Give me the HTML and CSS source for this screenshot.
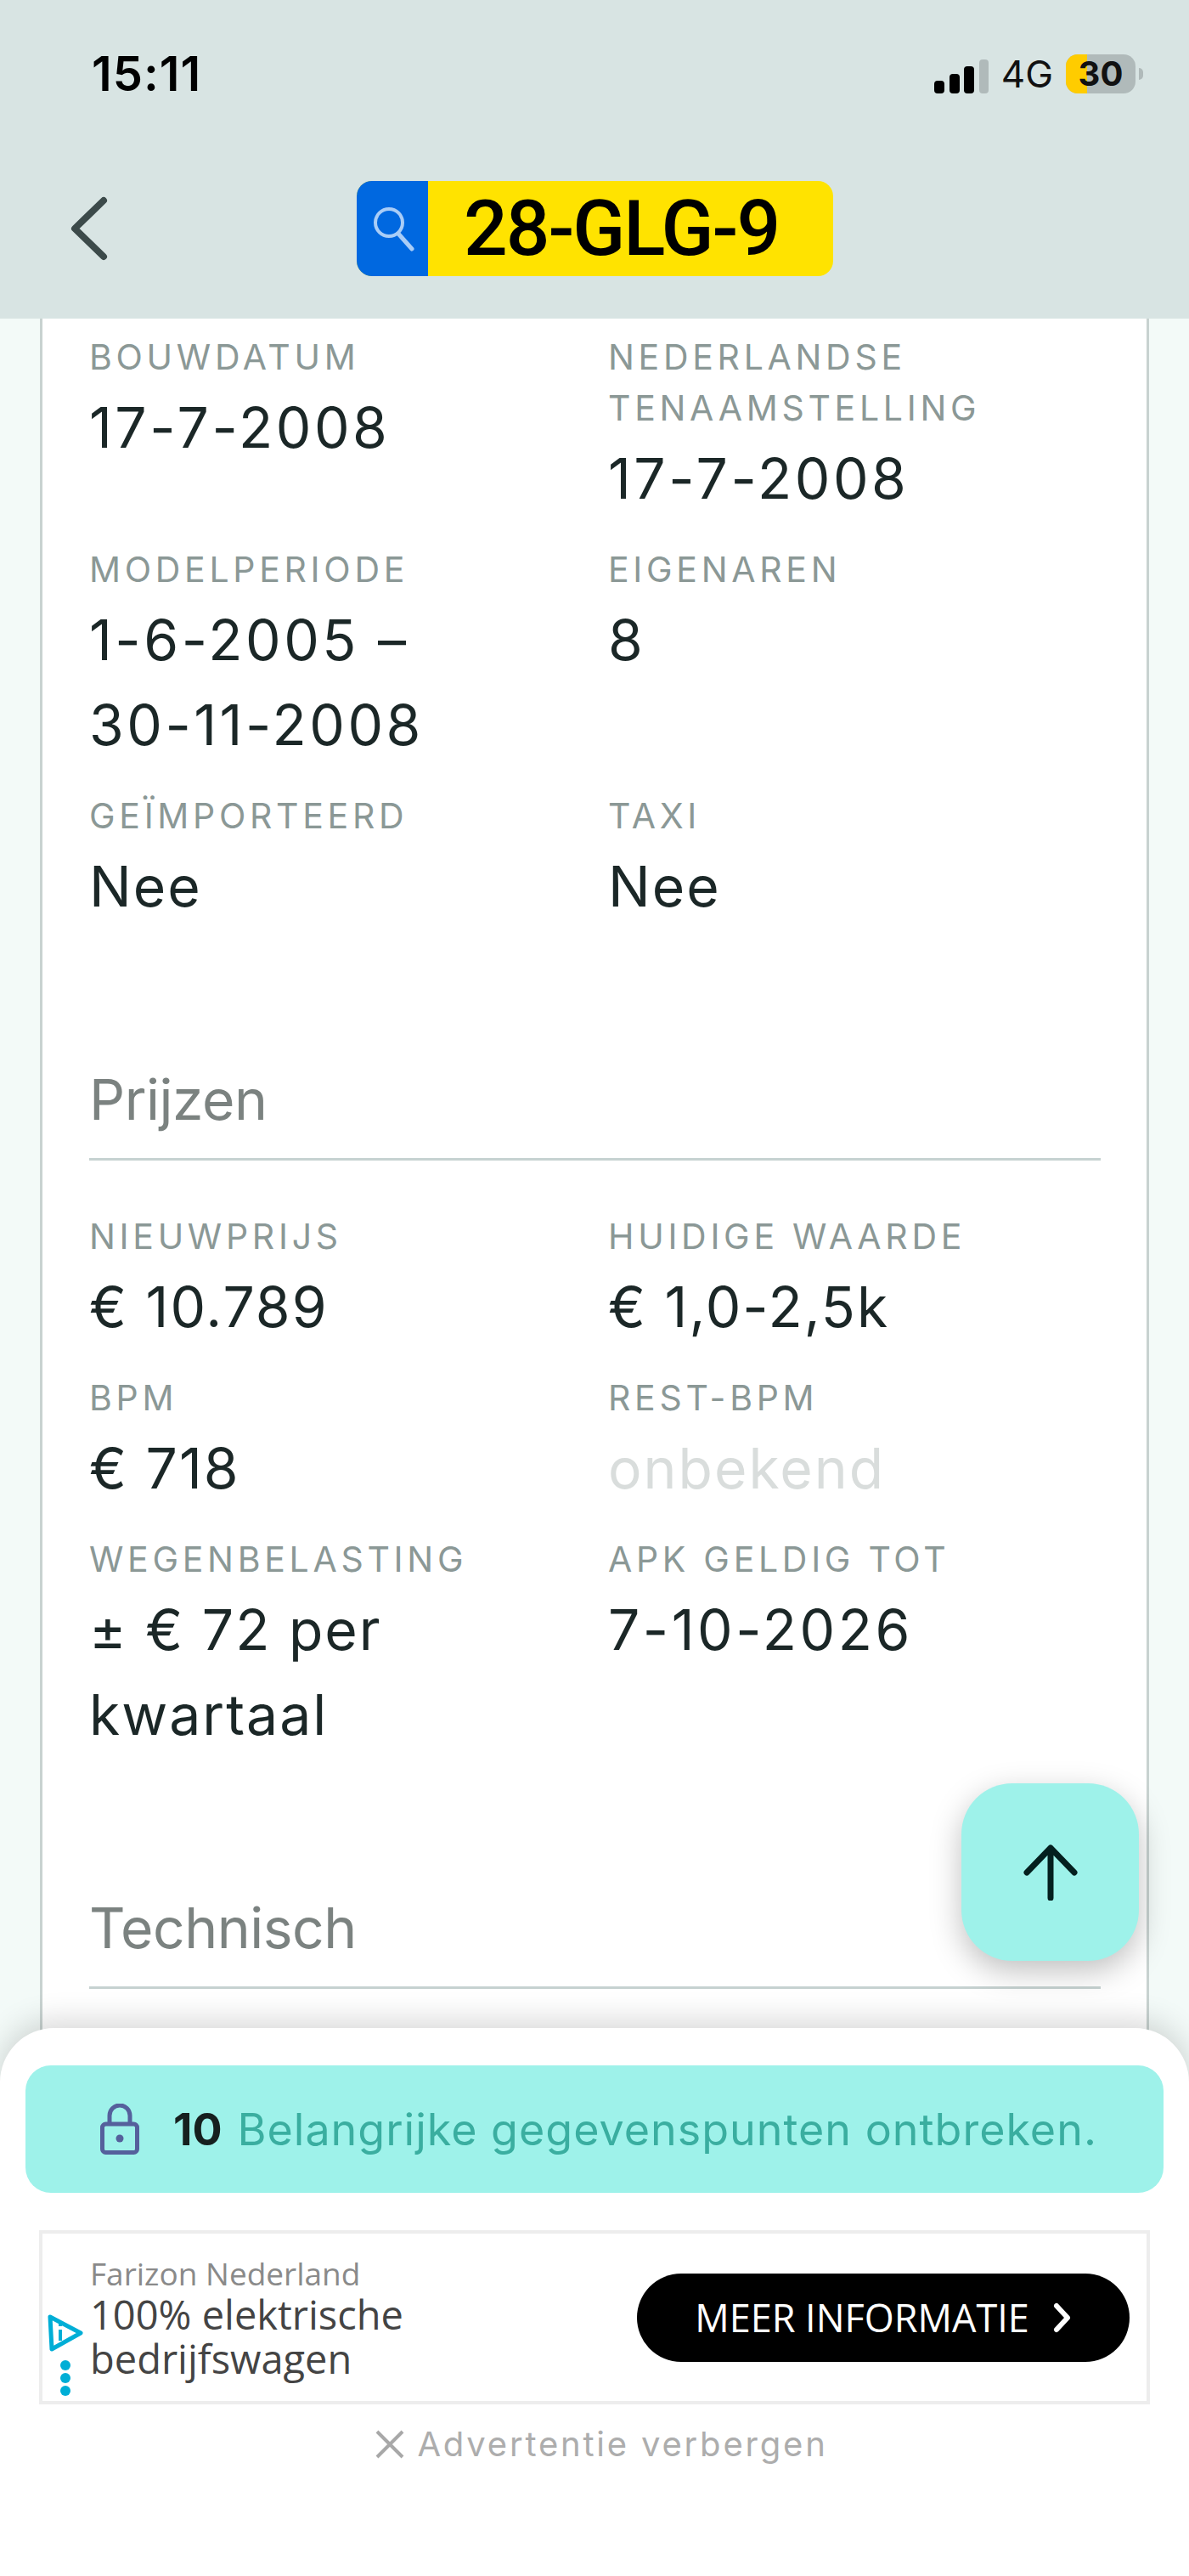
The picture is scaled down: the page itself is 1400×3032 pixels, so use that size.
FILE: index.html
```html
<!DOCTYPE html>
<html lang="nl">
<head>
    <meta charset="UTF-8">
    <meta name="viewport" content="width=device-width, initial-scale=1.0">
    <title>28-GLG-9</title>
    <link rel="stylesheet" href="styles.css">
</head>
<body>
    <div class="screen">
        <header class="top">
            <div class="status">
                <span class="clock">15:11</span>
                <div class="status-right">
                    <svg class="signal" width="66" height="42" viewBox="0 0 66 42">
                        <rect x="0" y="25" width="12" height="15" rx="4" fill="#000"/>
                        <rect x="18" y="17" width="12" height="23" rx="4" fill="#000"/>
                        <rect x="35" y="8" width="12" height="32" rx="4" fill="#000"/>
                        <rect x="53" y="0" width="11" height="40" rx="4" fill="#b0baba"/>
                    </svg>
                    <span class="network">4G</span>
                    <div class="battery">
                        <div class="battery-fill"></div>
                        <span class="battery-num">30</span>
                    </div>
                    <div class="battery-nub"></div>
                </div>
            </div>
            <div class="nav">
                <svg class="back" width="46" height="78" viewBox="0 0 46 78">
                    <path d="M40 6 L6 39 L40 72" fill="none" stroke="#3c4a4a" stroke-width="8" stroke-linecap="round" stroke-linejoin="round"/>
                </svg>
                <div class="plate">
                    <div class="plate-search">
                        <svg width="52" height="56" viewBox="0 0 52 56">
                            <circle cx="22" cy="21" r="16" fill="none" stroke="#a9cdf7" stroke-width="4"/>
                            <path d="M33 34 L49 52" fill="none" stroke="#a9cdf7" stroke-width="5" stroke-linecap="round"/>
                        </svg>
                    </div>
                    <div class="plate-text">28-GLG-9</div>
                </div>
            </div>
        </header>

        <main class="card">
            <div class="grid">
                <div class="item"><div class="label">BOUWDATUM</div><div class="value date">17-7-2008</div></div>
                <div class="item"><div class="label">NEDERLANDSE TENAAMSTELLING</div><div class="value date">17-7-2008</div></div>
                <div class="item"><div class="label">MODELPERIODE</div><div class="value date">1-6-2005 –<br>30-11-2008</div></div>
                <div class="item"><div class="label">EIGENAREN</div><div class="value">8</div></div>
                <div class="item"><div class="label">GEÏMPORTEERD</div><div class="value">Nee</div></div>
                <div class="item"><div class="label">TAXI</div><div class="value">Nee</div></div>
            </div>

            <h2 class="section">Prijzen</h2>
            <div class="grid">
                <div class="item"><div class="label">NIEUWPRIJS</div><div class="value">€ 10.789</div></div>
                <div class="item"><div class="label">HUIDIGE WAARDE</div><div class="value">€ 1,0-2,5k</div></div>
                <div class="item"><div class="label">BPM</div><div class="value">€ 718</div></div>
                <div class="item"><div class="label">REST-BPM</div><div class="value unknown">onbekend</div></div>
                <div class="item"><div class="label">WEGENBELASTING</div><div class="value">± € 72 per<br>kwartaal</div></div>
                <div class="item"><div class="label">APK GELDIG TOT</div><div class="value date">7-10-2026</div></div>
            </div>

            <h2 class="section">Technisch</h2>
        </main>

        <button class="fab">
            <svg width="64" height="66" viewBox="0 0 64 66">
                <path d="M32 63 L32 4 M4 33 L32 4 L60 33" fill="none" stroke="#04201f" stroke-width="7" stroke-linecap="round" stroke-linejoin="round"/>
            </svg>
        </button>

        <div class="sheet">
            <div class="banner">
                <svg class="lock" width="46" height="60" viewBox="0 0 46 60">
                    <rect x="2.5" y="24" width="41" height="33.5" rx="4" fill="none" stroke="#55609c" stroke-width="5"/>
                    <path d="M11 24 V14 a12 12 0 0 1 24 0 V24" fill="none" stroke="#55609c" stroke-width="5"/>
                    <circle cx="23" cy="41" r="4.5" fill="#55609c"/>
                </svg>
                <span class="banner-num">10</span>
                <span class="banner-text">Belangrijke gegevenspunten ontbreken.</span>
            </div>

            <div class="ad">
                <div class="ad-icons">
                    <svg width="44" height="46" viewBox="0 0 44 46">
                        <path d="M4 4 L40 23 L6 42 Z" fill="none" stroke="#00aed6" stroke-width="5" stroke-linejoin="round"/>
                        <path d="M16 19 V32 M16 12 V15" fill="none" stroke="#00aed6" stroke-width="4"/>
                    </svg>
                    <div class="ad-dots"><i></i><i></i><i></i></div>
                </div>
                <div class="ad-copy">
                    <div class="ad-brand">Farizon Nederland</div>
                    <div class="ad-title">100% elektrische bedrijfswagen</div>
                </div>
                <div class="ad-btn">
                    <span>MEER INFORMATIE</span>
                    <svg width="22" height="36" viewBox="0 0 22 36">
                        <path d="M4 4 L17 18 L4 32" fill="none" stroke="#fff" stroke-width="6" stroke-linecap="round" stroke-linejoin="round"/>
                    </svg>
                </div>
            </div>

            <div class="hide-ad">
                <svg width="36" height="36" viewBox="0 0 36 36">
                    <path d="M3 3 L33 33 M33 3 L3 33" fill="none" stroke="#a8a8a8" stroke-width="4"/>
                </svg>
                <span>Advertentie verbergen</span>
            </div>
        </div>
    </div>
</body>
</html>
```
FILE: styles.css
```css
* {
    box-sizing: border-box;
}

body {
    margin: 0;
    font-family: 'Inter', sans-serif;
    background-color: #f3faf8;
}

.screen {
    position: relative;
    width: 1400px;
    height: 3032px;
    overflow: hidden;
}

/* header */
.top {
    height: 375px;
    background-color: #d8e4e3;
    padding: 0 54px 0 0;
}

.status {
    height: 213px;
    display: flex;
    justify-content: space-between;
    align-items: flex-start;
    padding-top: 58px;
}

.clock {
    margin-left: 108px;
    font-size: 56px;
    font-weight: 600;
    line-height: 58px;
    letter-spacing: 1px;
    color: #000;
}

.status-right {
    display: flex;
    align-items: center;
    height: 58px;
}

.signal {
    margin-right: 13px;
    margin-top: 8px;
}

.network {
    font-size: 44px;
    font-weight: 400;
    color: #111;
    margin-right: 15px;
}

.battery {
    position: relative;
    width: 82px;
    height: 46px;
    border-radius: 14px;
    background-color: #b0baba;
    text-align: center;
}

.battery-fill {
    position: absolute;
    left: 0;
    top: 0;
    bottom: 0;
    width: 25px;
    border-radius: 14px 0 0 14px;
    background-color: #ffcc00;
}

.battery-num {
    position: relative;
    font-size: 40px;
    font-weight: 700;
    line-height: 46px;
    color: #111;
}

.battery-nub {
    width: 5px;
    height: 14px;
    margin-left: 4px;
    border-radius: 0 7px 7px 0;
    background-color: #b0baba;
}

.nav {
    display: flex;
    align-items: center;
    height: 112px;
}

.back {
    margin-left: 82px;
    margin-right: 292px;
}

.plate {
    width: 561px;
    height: 112px;
    display: flex;
    border-radius: 18px;
    background-color: #ffe300;
}

.plate-search {
    width: 84px;
    flex-shrink: 0;
    border-radius: 18px 0 0 18px;
    background-color: #0068e0;
    display: flex;
    align-items: center;
    justify-content: center;
}

.plate-text {
    padding-left: 42px;
    font-family: 'Roboto', sans-serif;
    font-size: 91px;
    font-weight: 500;
    line-height: 112px;
    letter-spacing: -2px;
    white-space: nowrap;
    color: #000;
}

/* card */
.card {
    margin: 0 47px;
    height: 2100px;
    padding: 15px 54px 0 55px;
    background-color: #fff;
    border-left: 3px solid #c8d2d0;
    border-right: 3px solid #c8d2d0;
}

.grid {
    display: grid;
    grid-template-columns: 611px 1fr;
    row-gap: 27px;
}

.label {
    margin-bottom: 3px;
    font-size: 41px;
    line-height: 60px;
    letter-spacing: 4.7px;
    color: #8b9896;
}

.value {
    font-size: 66px;
    line-height: 100px;
    letter-spacing: 2px;
    color: #1b2727;
}

.value.date {
    letter-spacing: 3.5px;
}

.value.unknown {
    color: #d9dddc;
}

.section {
    margin: 0;
    padding-top: 161px;
    height: 273px;
    font-size: 66px;
    font-weight: 400;
    line-height: 80px;
    letter-spacing: -0.5px;
    color: #7b8280;
    border-bottom: 3px solid #c6d2d1;
}

.section + .grid {
    margin-top: 59px;
}

/* scroll to top button */
.fab {
    position: absolute;
    left: 1132px;
    top: 2099px;
    width: 209px;
    height: 209px;
    padding: 0;
    border: none;
    border-radius: 60px;
    background-color: #9ef2ea;
    box-shadow: 0 12px 36px rgba(0, 0, 0, 0.25);
    display: flex;
    align-items: center;
    justify-content: center;
}

/* bottom sheet */
.sheet {
    position: absolute;
    left: 0;
    top: 2387px;
    width: 1400px;
    height: 645px;
    padding: 44px 30px 0;
    background-color: #fff;
    border-radius: 64px 64px 0 0;
    box-shadow: 0 -8px 36px rgba(0, 0, 0, 0.16);
}

.banner {
    height: 150px;
    display: flex;
    align-items: center;
    padding-left: 88px;
    border-radius: 30px;
    background-color: #9ef2ea;
}

.lock {
    margin-right: 40px;
}

.banner-num {
    font-size: 52px;
    font-weight: 700;
    color: #16201f;
    margin-right: 18px;
}

.banner-text {
    font-size: 52px;
    letter-spacing: 1px;
    white-space: nowrap;
    color: #3aaea0;
}

.ad {
    height: 205px;
    margin: 44px 16px 0;
    display: flex;
    align-items: center;
    border: 4px solid #ededed;
    font-family: 'Open Sans', sans-serif;
}

.ad-icons {
    width: 56px;
    align-self: flex-end;
    margin-bottom: 6px;
    padding-left: 5px;
}

.ad-icons svg {
    display: block;
}

.ad-dots {
    width: 12px;
    margin: 9px 0 0 16px;
}

.ad-dots i {
    display: block;
    width: 12px;
    height: 12px;
    margin-top: 3px;
    border-radius: 50%;
    background-color: #00aed6;
}

.ad-copy {
    width: 644px;
    padding-right: 200px;
}

.ad-brand {
    font-size: 37px;
    line-height: 44px;
    color: #8a8a8a;
}

.ad-title {
    font-size: 47px;
    line-height: 52px;
    color: #444;
}

.ad-btn {
    width: 580px;
    height: 104px;
    display: flex;
    align-items: center;
    justify-content: center;
    gap: 28px;
    border-radius: 52px;
    background-color: #000;
    color: #fff;
    font-size: 45px;
    white-space: nowrap;
}

.hide-ad {
    margin-top: 22px;
    padding-left: 16px;
    display: flex;
    align-items: center;
    justify-content: center;
    gap: 14px;
    font-size: 40px;
    letter-spacing: 2.8px;
    color: #adadad;
}
```
